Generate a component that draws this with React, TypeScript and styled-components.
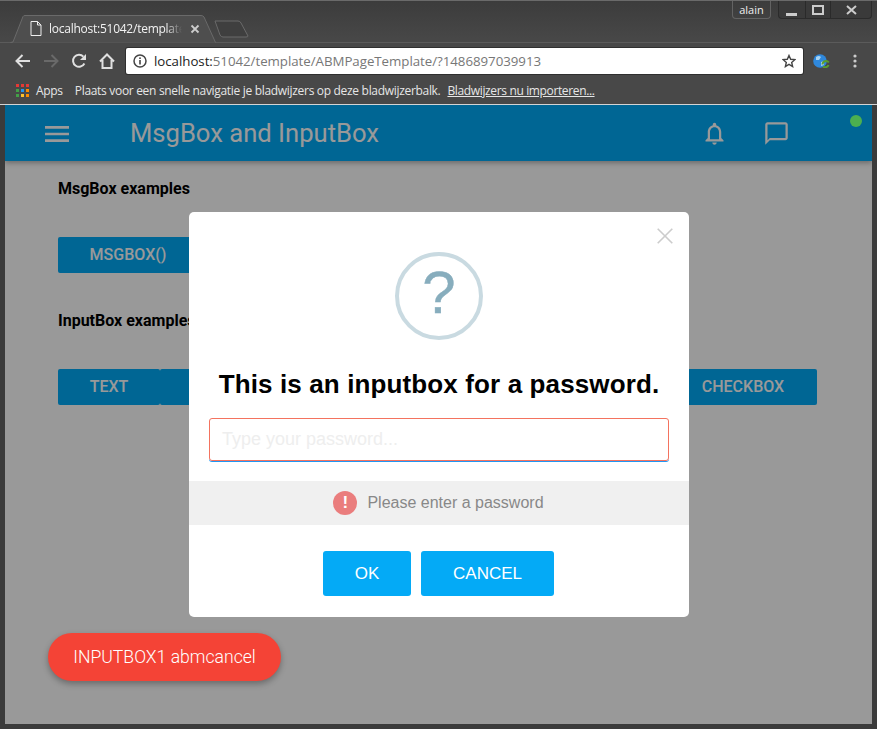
import React from "react";
import styled, { createGlobalStyle } from "styled-components";

const Global = createGlobalStyle`
  html, body { margin: 0; padding: 0; background: #3c3c3c; }
  * { box-sizing: border-box; }
  #root { width: 877px; height: 729px; overflow: hidden; }
`;

const Frame = styled.div`
  width: 877px; height: 729px; display: flex; flex-direction: column;
  background: #3b3b3b; border-top: 1px solid #6a6a6a;
  font-family: "Liberation Sans", Arial, sans-serif; position: relative;
`;
const TabStrip = styled.div`
  height: 42px; flex: none; display: flex; align-items: flex-end; padding-left: 10px; position: relative;
  background: linear-gradient(#3c3c3c, #484848);
  border-bottom: 1px solid #5b5b5b;
`;
const Tab = styled.div`
  width: 206px; height: 28px; position: relative; display: flex; align-items: center;
  padding: 0 0 1px 20px; margin-bottom: -1px;
`;
const TabShape = styled.svg`position: absolute; inset: 0;`;
const TabTitle = styled.span`
  position: relative; margin-left: 7px; width: 133px; height: 17px; line-height: 17px; white-space: nowrap; overflow: hidden;
  font-family: "Open Sans", sans-serif; font-size: 12px; letter-spacing: -0.25px; color: #f2f2f2;
  -webkit-mask-image: linear-gradient(to right, #000 88%, transparent);
  mask-image: linear-gradient(to right, #000 88%, transparent);
`;
const TabIcon = styled.svg`position: relative; flex: none;`;
const TabClose = styled.svg`position: relative; margin-left: 8px; flex: none;`;
const NewTab = styled.svg`margin: 0 0 4px -2px; flex: none;`;
const WindowButtons = styled.div`
  position: absolute; top: 0; right: 5px; display: flex; align-items: flex-start; gap: 7px;
`;
const UserChip = styled.div`
  width: 39px; height: 18px; border: 1px solid #636363; border-top: 0; border-radius: 0 0 4px 4px;
  color: #eee; font: 11px "Open Sans", sans-serif; display: flex; align-items: center; justify-content: center;
`;
const Controls = styled.div`
  display: flex; height: 18px; border: 1px solid #2b2b2b; border-top: 0; border-radius: 0 0 4px 4px; background: #3a3a3a;
`;
const Control = styled.div<{ $w: number }>`
  width: ${p => p.$w}px; display: flex; align-items: center; justify-content: center;
  border-left: 1px solid #2a2a2a; &:first-child { border-left: 0; }
`;
const Toolbar = styled.div`
  height: 35px; flex: none; background: #484848; display: flex; align-items: center; padding: 0 0 0 5px;
`;
const NavIcon = styled.div<{ $w: number }>`
  width: ${p => p.$w}px; flex: none; display: flex; justify-content: center; align-items: center;
`;
const Omnibox = styled.div`
  width: 677px; height: 26px; margin-left: 9px; background: #fff; border-radius: 2px; flex: none;
  display: flex; align-items: center; padding: 0 7px 0 7px; box-shadow: 0 0 0 1px #2f2f2f;
`;
const Url = styled.div`
  flex: 1; margin-left: 7px; white-space: nowrap; color: #777; font: 13.3px "Open Sans", sans-serif; letter-spacing: -0.04px;
  b { color: #222; font-weight: 400; }
`;
const Bookmarks = styled.div`
  height: 27px; flex: none; background: #484848; display: flex; align-items: center; padding: 0 0 1px 16px;
  font: 12px "Open Sans", sans-serif; color: #e6e6e6; letter-spacing: -0.31px; white-space: nowrap;
  border-bottom: 1px solid #d4d4d4;
`;
const AppsGrid = styled.div`
  display: grid; grid-template-columns: repeat(3, 3px); grid-auto-rows: 3px; gap: 2px; margin-right: 7px;
`;
const AppDot = styled.span<{ $c: string }>`background: ${p => p.$c};`;
const BookmarkNote = styled.span`margin-left: 12px;`;
const BookmarkLink = styled.span`margin-left: 7px; text-decoration: underline; letter-spacing: -0.36px;`;
const Page = styled.div`
  flex: 1; margin: 0 5px 5px; background: #fff; position: relative; overflow: hidden; display: flex; flex-direction: column;
`;
const NavBar = styled.div`
  height: 56px; flex: none; background: #01aaf7; display: flex; align-items: center; color: #fff;
  padding: 0 82px 0 36px; box-shadow: 0 2px 5px rgba(0,0,0,.3);
`;
const NavTitle = styled.div`
  font: 25.6px Roboto, sans-serif; margin-left: 57px; flex: 1;
`;
const NavIconSvg = styled.svg<{ $ml?: number }>`flex: none; margin-left: ${p => p.$ml ?? 0}px; margin-top: 1px; fill: #fff;`;
const Content = styled.div`
  padding: 19px 55px 0 53px; font-family: Roboto, sans-serif;
`;
const Heading = styled.div`font-weight: 700; font-size: 16px; line-height: 18px; color: #000;`;
const ButtonRow = styled.div`display: flex; margin: 39px 0 39px;`;
const Btn = styled.div<{ $w?: number }>`
  height: 36px; background: #01aaf7; color: #fff; border-radius: 2px; font-size: 16px; font-weight: 500;
  display: flex; align-items: center; justify-content: center; padding-bottom: 1px;
  ${p => p.$w ? `width: ${p.$w}px; flex: none;` : `flex: 1;`}
`;
const Overlay = styled.div`
  position: absolute; inset: 0; background: rgba(0,0,0,.4); display: flex; align-items: center; justify-content: center;
`;
const Modal = styled.div`
  width: 500px; height: 405px; background: #fff; border-radius: 5px; position: relative;
  display: flex; flex-direction: column; align-items: center; padding-top: 40px; margin-left: 1px;
`;
const CloseX = styled.svg`position: absolute; top: 16px; right: 16px;`;
const QuestionIcon = styled.div`
  width: 88px; height: 88px; border-radius: 50%; border: 4px solid #c9dae1; color: #87adbd;
  font-size: 60px; line-height: 74px; text-align: center; flex: none; -webkit-text-stroke: .4px #87adbd;
`;
const Title = styled.h2`
  margin: 27px 0 0; font-size: 26px; line-height: 34px; font-weight: 700; color: #000; white-space: nowrap; letter-spacing: .12px;
`;
const PasswordField = styled.div`
  width: 460px; height: 43px; margin: 17px 0 1px; border: 1px solid #f4735f; border-radius: 3px;
  box-shadow: 0 1px 0 #2196f3; padding: 0 12px; display: flex; align-items: center;
  color: #eeeeee; font-size: 18px; flex: none;
`;
const Validation = styled.div`
  width: 100%; height: 44px; margin-top: 19px; background: #f0f0f0; display: flex; align-items: center; justify-content: center;
  color: #888; font-size: 16px; flex: none; padding-right: 1px;
`;
const ErrorDot = styled.span`
  width: 24px; height: 24px; border-radius: 50%; background: #ea7d7d; color: #fff; font-weight: 700; font-size: 17px;
  display: flex; align-items: center; justify-content: center; margin-right: 10px;
`;
const Actions = styled.div`display: flex; gap: 10px; margin: 26px 1px 0 0;`;
const ActionBtn = styled.div<{ $w: number }>`
  width: ${p => p.$w}px; height: 45px; background: #04aaf6; border-radius: 3px; color: #fff; font-size: 17px;
  display: flex; align-items: center; justify-content: center;
`;
const StatusDot = styled.div`
  position: absolute; top: 10px; right: 10px; width: 12px; height: 12px; border-radius: 50%; background: #4caf50;
`;
const Toast = styled.div`
  position: absolute; left: 43px; top: 528px; width: 233px; height: 48px; border-radius: 24px; background: #f44336;
  color: #fff; font: 300 17.6px Roboto, sans-serif; display: flex; align-items: center; justify-content: center;
  box-shadow: 0 3px 6px rgba(0,0,0,.3);
`;

const appColors = ["#e53935","#e53935","#e53935","#43a047","#2196f3","#fb8c00","#43a047","#fbc02d","#fb8c00"];

export default function App() {
  return (
    <>
      <Global />
      <Frame>
        <TabStrip>
          <Tab>
            <TabShape width="206" height="28" viewBox="0 0 206 28">
              <path d="M0.5 27.5 L3 27 L13 1.5 Q13.5 .5 15 .5 L191 .5 Q193 .5 194 2 L205.5 27.5" fill="#4e4e4e" stroke="#6a6a6a" />
            </TabShape>
            <TabIcon width="12" height="15" viewBox="0 0 12 15">
              <path d="M1 .5 H7.5 L11 4 V14.5 H1 Z M7.5 .5 V4 H11" fill="none" stroke="#eee" />
            </TabIcon>
            <TabTitle>localhost:51042/template/ABMPageTemplate</TabTitle>
            <TabClose width="10" height="10" viewBox="0 0 10 10">
              <path d="M1.5 1.5 L8.5 8.5 M8.5 1.5 L1.5 8.5" stroke="#ccc" strokeWidth="1.8" />
            </TabClose>
          </Tab>
          <NewTab width="36" height="18" viewBox="0 0 36 18">
            <path d="M1 1 H24 Q26 1 27 3 L34 16 Q34 17 32 17 H9 Q7 17 6 15 Z" fill="#3f3f3f" stroke="#6a6a6a" />
          </NewTab>
          <WindowButtons>
            <UserChip>alain</UserChip>
            <Controls>
              <Control $w={26}><svg width="12" height="12"><rect width="11" height="3" y="9" fill="#ccc" /></svg></Control>
              <Control $w={25}><svg width="12" height="10"><rect x="1" y="1" width="10" height="8" fill="none" stroke="#ccc" strokeWidth="2" /></svg></Control>
              <Control $w={41}><svg width="11" height="10" viewBox="0 0 11 10"><path d="M1 1 L10 9 M10 1 L1 9" stroke="#ccc" strokeWidth="2" /></svg></Control>
            </Controls>
          </WindowButtons>
        </TabStrip>
        <Toolbar>
          <NavIcon $w={36}>
            <svg width="16" height="14" viewBox="0 0 16 14"><path d="M15 7 H2 M7.5 1 L1.5 7 L7.5 13" fill="none" stroke="#e0e0e0" strokeWidth="2" /></svg>
          </NavIcon>
          <NavIcon $w={20}>
            <svg width="16" height="14" viewBox="0 0 16 14"><path d="M1 7 H14 M8.5 1 L14.5 7 L8.5 13" fill="none" stroke="#696969" strokeWidth="2" /></svg>
          </NavIcon>
          <NavIcon $w={36}>
            <svg width="16" height="16" viewBox="0 0 16 16"><path d="M13.4 10.5 A6 6 0 1 1 12.4 3.6" fill="none" stroke="#e0e0e0" strokeWidth="2" /><path d="M15 1 V7 H9 Z" fill="#e0e0e0" /></svg>
          </NavIcon>
          <NavIcon $w={20}>
            <svg width="16" height="16" viewBox="0 0 16 16"><path d="M1 8.5 L8 1.5 L15 8.5 M3.5 7 V15 H12.5 V7" fill="none" stroke="#e0e0e0" strokeWidth="2" /></svg>
          </NavIcon>
          <Omnibox>
            <svg width="14" height="14" viewBox="0 0 14 14"><circle cx="7" cy="7" r="6" fill="none" stroke="#444" strokeWidth="1.5" /><rect x="6.2" y="6" width="1.6" height="4.5" fill="#444" /><rect x="6.2" y="3.4" width="1.6" height="1.6" fill="#444" /></svg>
            <Url><b>localhost:</b>51042/template/ABMPageTemplate/?1486897039913</Url>
            <svg width="14" height="14" viewBox="0 0 24 24"><path d="M12 2.5 L14.9 9 L22 9.7 L16.6 14.4 L18.2 21.4 L12 17.7 L5.8 21.4 L7.4 14.4 L2 9.7 L9.1 9 Z" fill="none" stroke="#444" strokeWidth="2.4" /></svg>
          </Omnibox>
          <NavIcon $w={36}>
            <svg width="17" height="14" viewBox="0 0 17 14"><circle cx="7" cy="7" r="6.8" fill="#2f88dc" /><path d="M3 3 Q6 1 8 3 L6 6 L3 6 Z M8 8 L11 7 L11 11 L8 12 Z" fill="#a9d4f2" /><path d="M9.5 10.5 A3.5 3.5 0 0 1 15.8 8.5 M15.5 11 A3.5 3.5 0 0 1 10 12.5" fill="none" stroke="#5a9e2e" strokeWidth="2" /></svg>
          </NavIcon>
          <NavIcon $w={32}>
            <svg width="4" height="14" viewBox="0 0 4 14"><circle cx="2" cy="2" r="1.6" fill="#ccc" /><circle cx="2" cy="7" r="1.6" fill="#ccc" /><circle cx="2" cy="12" r="1.6" fill="#ccc" /></svg>
          </NavIcon>
        </Toolbar>
        <Bookmarks>
          <AppsGrid>{appColors.map((c, i) => <AppDot key={i} $c={c} />)}</AppsGrid>
          <span>Apps</span>
          <BookmarkNote>Plaats voor een snelle navigatie je bladwijzers op deze bladwijzerbalk.</BookmarkNote>
          <BookmarkLink>Bladwijzers nu importeren...</BookmarkLink>
        </Bookmarks>
        <Page>
          <NavBar>
            <NavIconSvg width="32" height="32" viewBox="0 0 24 24"><path d="M3 18h18v-2H3v2zm0-5h18v-2H3v2zm0-5h18V6H3v2z" /></NavIconSvg>
            <NavTitle>MsgBox and InputBox</NavTitle>
            <NavIconSvg width="27" height="27" viewBox="0 0 24 24"><path d="M12 22c1.1 0 2-.9 2-2h-4c0 1.1.9 2 2 2zm6-6v-5c0-3.07-1.63-5.64-4.5-6.32V4c0-.83-.67-1.5-1.5-1.5s-1.5.67-1.5 1.5v.68C7.64 5.36 6 7.92 6 11v5l-2 2v1h16v-1l-2-2zm-2 1H8v-6c0-2.48 1.51-4.5 4-4.5s4 2.02 4 4.5v6z" /></NavIconSvg>
            <NavIconSvg $ml={35} width="27" height="27" viewBox="0 0 24 24"><path d="M20 2H4c-1.1 0-2 .9-2 2v18l4-4h14c1.1 0 2-.9 2-2V4c0-1.1-.9-2-2-2zm0 14H6l-2 2V4h16v12z" /></NavIconSvg>
          </NavBar>
          <Content>
            <Heading>MsgBox examples</Heading>
            <ButtonRow><Btn $w={140}>MSGBOX()</Btn></ButtonRow>
            <Heading>InputBox examples</Heading>
            <ButtonRow>
              <Btn $w={102}>TEXT</Btn>
              <Btn />
              <Btn $w={148}>CHECKBOX</Btn>
            </ButtonRow>
          </Content>
          <Overlay>
            <Modal>
              <CloseX width="16" height="16" viewBox="0 0 16 16"><path d="M.7 .7 L15.3 15.3 M15.3 .7 L.7 15.3" stroke="#ccc" strokeWidth="1.6" /></CloseX>
              <QuestionIcon>?</QuestionIcon>
              <Title>This is an inputbox for a password.</Title>
              <PasswordField>Type your password...</PasswordField>
              <Validation><ErrorDot>!</ErrorDot>Please enter a password</Validation>
              <Actions>
                <ActionBtn $w={88}>OK</ActionBtn>
                <ActionBtn $w={133}>CANCEL</ActionBtn>
              </Actions>
            </Modal>
          </Overlay>
          <StatusDot />
          <Toast>INPUTBOX1 abmcancel</Toast>
        </Page>
      </Frame>
    </>
  );
}
